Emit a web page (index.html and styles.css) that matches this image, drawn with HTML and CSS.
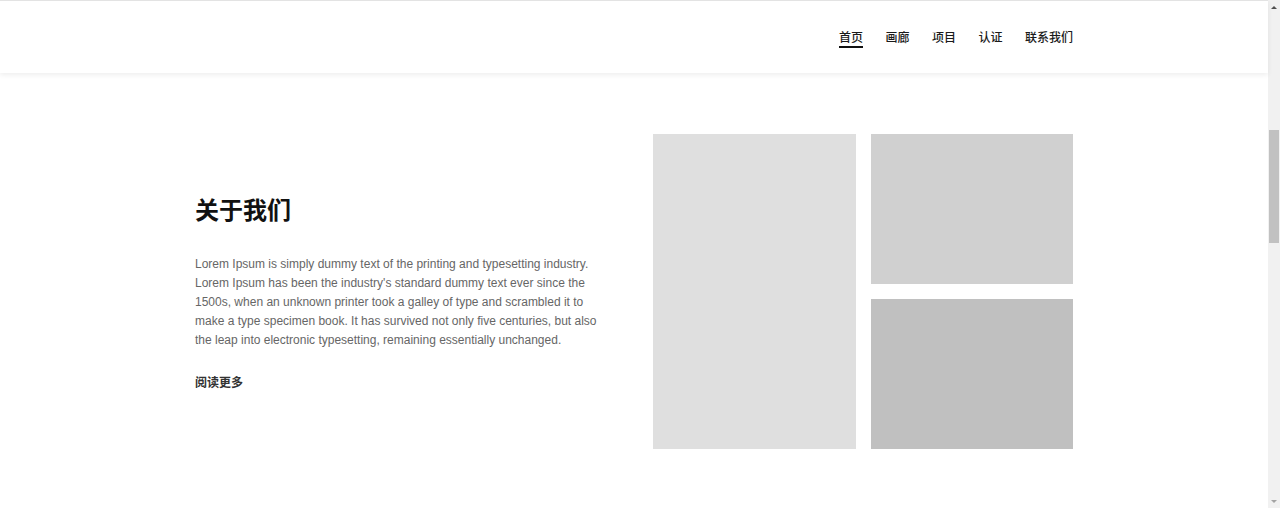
FILE: index.html
```html
<!DOCTYPE html>
<html lang="zh">
<head>
<meta charset="utf-8">
<title>关于我们</title>
<link rel="stylesheet" href="styles.css">
</head>
<body>
<div class="page">
  <header class="site-header">
    <div class="container header-inner">
      <nav class="main-nav">
        <a class="nav-link active" href="#">首页</a>
        <a class="nav-link" href="#">画廊</a>
        <a class="nav-link" href="#">项目</a>
        <a class="nav-link" href="#">认证</a>
        <a class="nav-link" href="#">联系我们</a>
      </nav>
    </div>
  </header>
  <main>
    <section class="about">
      <div class="container about-inner">
        <div class="about-text">
          <h2 class="about-title">关于我们</h2>
          <p class="about-desc">Lorem Ipsum is simply dummy text of the printing and typesetting industry. Lorem Ipsum has been the industry's standard dummy text ever since the 1500s, when an unknown printer took a galley of type and scrambled it to make a type specimen book. It has survived not only five centuries, but also the leap into electronic typesetting, remaining essentially unchanged.</p>
          <a class="read-more" href="#">阅读更多</a>
        </div>
        <div class="about-gallery">
          <div class="tile tile-tall"></div>
          <div class="tile tile-top"></div>
          <div class="tile tile-bottom"></div>
        </div>
      </div>
    </section>
  </main>
</div>
<div class="scrollbar" aria-hidden="true">
  <div class="sb-arrow sb-up"></div>
  <div class="sb-track"><div class="sb-thumb"></div></div>
  <div class="sb-arrow sb-down"></div>
</div>
</body>
</html>
```

FILE: styles.css
```css
* {
  box-sizing: border-box;
}

html, body {
  height: 100%;
}

body {
  margin: 0;
  background: #fff;
  font-family: "Liberation Sans", Arial, "Noto Sans CJK SC", sans-serif;
  color: #333;
  display: flex;
  overflow: hidden;
}

a {
  text-decoration: none;
  color: inherit;
}

.page {
  flex: 1;
  min-width: 0;
}

.container {
  width: 878px;
  margin: 0 auto;
}

.site-header {
  height: 73px;
  border-top: 1px solid #e3e3e3;
  background: #fff;
  box-shadow: 0 2px 5px rgba(0, 0, 0, 0.07);
  position: relative;
  z-index: 2;
}

.header-inner {
  height: 100%;
  display: flex;
  align-items: center;
  justify-content: flex-end;
}

.main-nav {
  display: flex;
  gap: 22.5px;
  padding-top: 2px;
}

.nav-link {
  font-family: "Noto Sans CJK SC", sans-serif;
  font-size: 12px;
  font-weight: 500;
  line-height: 17px;
  color: #1a1a1a;
  padding-bottom: 1px;
  border-bottom: 2px solid transparent;
}

.nav-link.active {
  border-bottom-color: #111;
}

.about {
  padding-top: 61px;
}

.about-inner {
  display: flex;
  align-items: center;
  justify-content: space-between;
}

.about-text {
  width: 410px;
  padding-top: 2px;
}

.about-title {
  margin: 0 0 32px;
  font-family: "Noto Sans CJK SC", sans-serif;
  font-size: 24px;
  font-weight: 700;
  line-height: 29px;
  color: #111;
}

.about-desc {
  margin: 0 0 23px;
  font-size: 12px;
  line-height: 19px;
  color: #666;
}

.read-more {
  display: block;
  font-family: "Noto Sans CJK SC", sans-serif;
  font-size: 12px;
  font-weight: 700;
  line-height: 18px;
  color: #333;
}

.about-gallery {
  width: 420px;
  display: grid;
  grid-template-columns: 203px 202px;
  grid-template-rows: 150px 150px;
  gap: 15px;
}

.tile-tall {
  grid-row: 1 / 3;
  background: #dfdfdf;
}

.tile-top {
  background: #d0d0d0;
}

.tile-bottom {
  background: #c0c0c0;
}

.scrollbar {
  width: 12px;
  height: 100%;
  background: #f1f1f1;
  display: flex;
  flex-direction: column;
}

.sb-arrow {
  height: 14px;
  display: flex;
  align-items: center;
  justify-content: center;
}

.sb-up::before {
  content: "";
  border-left: 3px solid transparent;
  border-right: 3px solid transparent;
  border-bottom: 3px solid #505050;
}

.sb-down::before {
  content: "";
  border-left: 3px solid transparent;
  border-right: 3px solid transparent;
  border-top: 3px solid #a3a3a3;
}

.sb-track {
  flex: 1;
  padding-top: 116px;
}

.sb-thumb {
  height: 113px;
  margin: 0 1px;
  background: #c1c1c1;
}
```
